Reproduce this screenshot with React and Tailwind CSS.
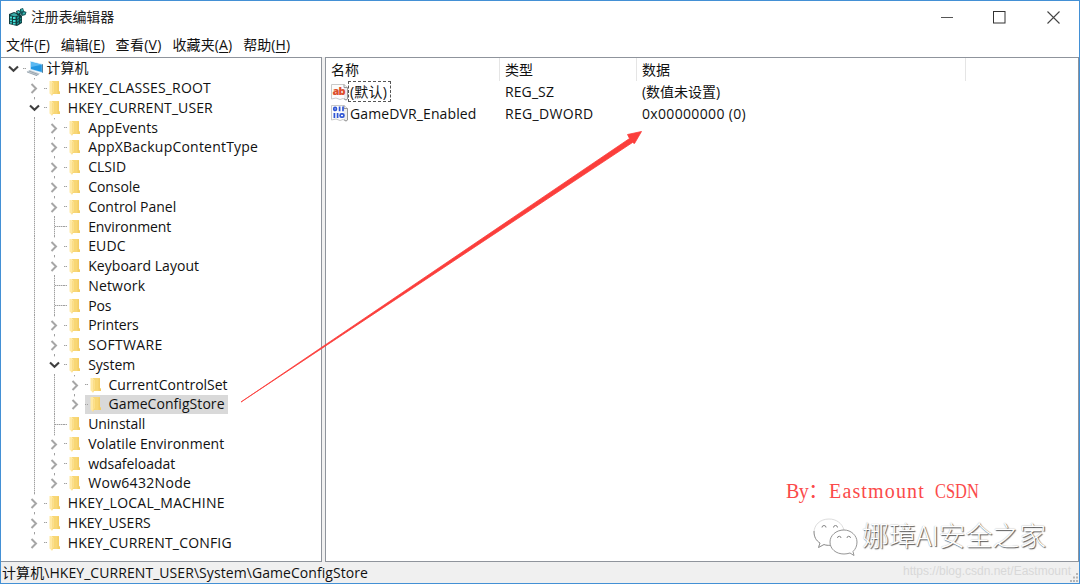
import { useLayoutEffect, useRef } from "react";

// Spreads a label over a given width by adjusting its letter spacing.
function Fit({ w, className = "", children }) {
  const ref = useRef(null);
  useLayoutEffect(() => {
    const el = ref.current;
    el.style.letterSpacing = "0px";
    const n = el.textContent.length;
    el.style.letterSpacing = `${(w - el.getBoundingClientRect().width) / n}px`;
  }, [w]);
  return (
    <span ref={ref} className={`inline-block shrink-0 whitespace-nowrap ${className}`}>
      {children}
    </span>
  );
}

const TREE = [
  { d: 0, t: "计算机", w: 42, s: "open" },
  { d: 1, t: "HKEY_CLASSES_ROOT", w: 143, s: "closed" },
  { d: 1, t: "HKEY_CURRENT_USER", w: 145, s: "open" },
  { d: 2, t: "AppEvents", w: 70, s: "closed" },
  { d: 2, t: "AppXBackupContentType", w: 170, s: "closed" },
  { d: 2, t: "CLSID", w: 38, s: "closed" },
  { d: 2, t: "Console", w: 52, s: "closed" },
  { d: 2, t: "Control Panel", w: 88, s: "closed" },
  { d: 2, t: "Environment", w: 83, s: "leaf" },
  { d: 2, t: "EUDC", w: 37.5, s: "closed" },
  { d: 2, t: "Keyboard Layout", w: 111, s: "closed" },
  { d: 2, t: "Network", w: 57, s: "leaf" },
  { d: 2, t: "Pos", w: 23, s: "leaf" },
  { d: 2, t: "Printers", w: 50.5, s: "closed" },
  { d: 2, t: "SOFTWARE", w: 74.5, s: "closed" },
  { d: 2, t: "System", w: 47, s: "open" },
  { d: 3, t: "CurrentControlSet", w: 119, s: "closed" },
  { d: 3, t: "GameConfigStore", w: 116, s: "closed", sel: true, last: true },
  { d: 2, t: "Uninstall", w: 57, s: "leaf" },
  { d: 2, t: "Volatile Environment", w: 136, s: "closed" },
  { d: 2, t: "wdsafeloadat", w: 87, s: "closed" },
  { d: 2, t: "Wow6432Node", w: 103, s: "closed", last: true },
  { d: 1, t: "HKEY_LOCAL_MACHINE", w: 157, s: "closed" },
  { d: 1, t: "HKEY_USERS", w: 83, s: "closed" },
  { d: 1, t: "HKEY_CURRENT_CONFIG", w: 164, s: "closed", last: true },
];

const VDOTS = "w-px bg-[repeating-linear-gradient(to_bottom,#a0a0a0_0_1px,#dcdcdc_1px_2px)]";
const HDOTS = "h-px bg-[repeating-linear-gradient(to_right,#a0a0a0_0_1px,#d4d4d4_1px_2px)]";

function Chevron({ open }) {
  return open ? (
    <svg width="11" height="8" viewBox="0 0 11 8" className="shrink-0">
      <path d="M1 1.4 5.5 5.7 10 1.4" fill="none" stroke="#404040" strokeWidth="2.1" />
    </svg>
  ) : (
    <svg width="8" height="11" viewBox="0 0 8 11" className="shrink-0">
      <path d="M1.5 1 6 5.5 1.5 10" fill="none" stroke="#a6a6a6" strokeWidth="2" />
    </svg>
  );
}

function Folder() {
  return (
    <svg width="12" height="16" viewBox="0 0 12 16" className="shrink-0">
      <path d="M3 1H10V11L11 12V14H3Z" fill="#f8d775" />
      <path d="M8.5 1.5H10V11L11 12V14H8.5Z" fill="#f3cd66" />
      <path d="M.5 1H2.5L4.5 3V12L3 15.4 .5 13.5Z" fill="#ffe9a4" />
      <path d="M3.6 3V12.5L3 15.4" fill="none" stroke="#fbdc85" />
    </svg>
  );
}

function Computer() {
  return (
    <svg width="18" height="17" viewBox="0 0 18 17" className="shrink-0">
      <path d="M4 1 16.5 4V13L4 9.5Z" fill="#bfe2f8" />
      <path d="M5 2.1 15.8 4.7V11.9L5 9Z" fill="#2196e3" />
      <path d="M5 2.1 15.8 4.7 5 7Z" fill="#5ab8f2" />
      <path d="M16 4V13L17 12.5V4.5Z" fill="#537f9c" />
      <path d="M.5 11.5 4 10 14 13.5 11 16Z" fill="#c5ced5" />
      <path d="M1 12 11 15.7M3 11 12.5 14.7" stroke="#8e9ba5" strokeWidth=".8" />
    </svg>
  );
}

function TreeRow({ d, t, w, s, sel, last }) {
  const cells = [];
  for (let i = 1; i < d; i++) cells.push(i);
  return (
    <div className="flex h-[19.77px] items-center">
      {d > 0 && <span className="w-[20.4px] shrink-0" />}
      {cells.map((i) => (
        <span key={i} className="flex h-full w-[20.4px] shrink-0 justify-center pl-px">
          <span className={`h-full ${VDOTS}`} />
        </span>
      ))}
      <span className="flex h-full w-[20.4px] shrink-0 flex-col items-center pl-px">
        {s === "leaf" ? (
          <span className="flex h-full items-center pl-[11px]">
            <span className={`h-full ${VDOTS}`} />
            <span className={`w-2.5 ${HDOTS}`} />
          </span>
        ) : (
          <>
            <span className={`h-0.5 shrink-0 ${d > 0 ? VDOTS : ""}`} />
            <span className="flex flex-1 items-center">
              <Chevron open={s === "open"} />
            </span>
            <span className={`h-px shrink-0 ${d > 0 && !last ? VDOTS : ""}`} />
          </>
        )}
      </span>
      <span
        className={`flex h-full items-center ${sel ? "bg-[#d9d9d9]" : ""} ${
          d === 0 ? "w-[70px]" : ""
        }`}
      >
        <span className={`shrink-0 ${HDOTS} ${d === 0 ? "w-[3px]" : "mr-0.5 w-[3px]"}`} />
        {d === 0 ? <Computer /> : <Folder />}
        <span className={d === 0 ? "w-0.5" : "w-[7px]"} />
        <Fit w={w} className={`mb-px ${sel ? "mr-[3px]" : ""}`}>{t}</Fit>
      </span>
    </div>
  );
}

function AppIcon() {
  return (
    <svg width="19" height="18" viewBox="0 0 19 18">
      <path d="M1 6 6 4 12 6 14 8V15L9 18 1 16Z" fill="#123c3f" />
      <path d="M2 7 6 5 11 7 7 8.5Z" fill="#3aa9a6" />
      <path
        d="M2 8.5H4V10.5H2ZM5 9H7.5V11H5ZM2 11.5H4V13.3H2ZM5 12H7.5V14H5ZM2 14.3H4V15.6H2ZM5 14.8H7.5V16.6H5Z"
        fill="#42dcd4"
      />
      <path d="M9 9 11 8V10L9 11ZM9 12 11 11V13L9 14ZM9 15 11 14V15.5L9 16.7ZM12 10 13.3 9.5V11L12 11.8ZM12 13 13.3 12.3V14L12 14.7Z" fill="#168f8d" />
      <path d="M8 3 11 2 13 4 12 7 9 7Z" fill="#103a3e" />
      <path d="M9 3.6 11 3 12 4.4 10 5.7Z" fill="#3fc9c2" />
      <path d="M12 1 15 0 16 3 18.5 4 17.5 7 14 8 12 5Z" fill="#14565a" />
      <path d="M13 1.6 14.5 1 15 3 13.5 3.6ZM15 4.4 17.4 4.6 16.5 6.3 14.5 6.4Z" fill="#37bdb7" />
    </svg>
  );
}

function ValueIcon({ kind }) {
  return (
    <svg width="18" height="18" viewBox="0 0 18 18" className="shrink-0">
      <path d="M.5 1.5H13L16.5 4.5V16L15 17 12 15.5 9 16.5 5 15 .5 16Z" fill="#fcfcfc" stroke="#c9c9c9" />
      <path d="M13 1.5V4.5H16.5V16L15 17 13 15.7" fill="#eee" stroke="#8f8f8f" strokeWidth=".9" />
      {kind === "sz" ? (
        <text x="1.5" y="12.3" fontFamily="Open Sans, sans-serif" fontWeight="800" fontSize="11" fill="#dd4f2d" textLength="13">
          ab
        </text>
      ) : (
        <g fill="none" stroke="#2f55d4" strokeWidth="1.7">
          <rect x="2.8" y="3.4" width="2.6" height="3" rx="1.2" />
          <path d="M8.6 2.6V7.2M12 2.6V7.2M3.4 9V14M6.6 9V14" />
          <rect x="9.1" y="9.9" width="3.8" height="3.2" rx="1.4" />
        </g>
      )}
    </svg>
  );
}

const MENU = [
  ["文件", "F", 44],
  ["编辑", "E", 44],
  ["查看", "V", 46],
  ["收藏夹", "A", 60],
  ["帮助", "H", 47],
];

function WeChat() {
  return (
    <svg width="45" height="39" viewBox="0 0 45 39" className="shrink-0">
      <g fill="#fff" stroke="#8a8a8a" strokeWidth=".9">
        <path d="M16 1C7 1 1 7 1 14.500 1 19 3 22.500 7 25L5.500 29.500 11 26.500C13 27.300 15 27.500 18 27.300 16 19 22 12.500 31 12 29 5 23 1 16 1Z" stroke="#d8d8d8" />
        <path d="M1 13C1 19 3 22.500 7 25L5.500 29.500 11 26.500C13 27.300 15 27.500 17 27.300" fill="none" />
        <path d="M31 12C23 12 17 17.500 17 24 17 31 23 36 31 36 33 36 35 35.600 37 35L41 37.500 40 33.500C42.500 31.200 44 28 44 24 44 17.500 38 12 31 12Z" />
      </g>
      <path
        d="M9 9.500A2 2 0 0 1 13 9.500M20.500 9.500A2 2 0 0 1 24.500 9.500M24.500 20A1.700 1.700 0 0 1 28 20M34 20A1.700 1.700 0 0 1 37.500 20"
        fill="none"
        stroke="#888"
      />
    </svg>
  );
}

export default function App() {
  return (
    <div className="relative flex h-[584px] w-[1080px] flex-col overflow-hidden border border-[#4390d5] bg-[#f0f0f0] font-['Open_Sans','Noto_Sans_CJK_SC',sans-serif] text-[14px] leading-[19px] text-[#111]">
      <header className="flex h-8 shrink-0 items-center bg-white pl-[7px]">
        <AppIcon />
        <Fit w={83} className="mb-0.5 ml-1 text-[#222]">注册表编辑器</Fit>
        <div className="ml-auto flex items-center pr-[19px]">
          <svg width="12" height="13" viewBox="0 0 12 13" className="mr-10">
            <path d="M0 6.500H12" stroke="#555" />
          </svg>
          <svg width="13" height="13" viewBox="0 0 13 13" className="mr-[41px]">
            <rect x=".5" y=".5" width="11.500" height="11.500" fill="none" stroke="#333" />
          </svg>
          <svg width="13" height="13" viewBox="0 0 13 13">
            <path d="M.5.5 12.500 12.500M12.500.5.5 12.500" stroke="#444" strokeWidth="1.100" />
          </svg>
        </div>
      </header>

      <nav className="flex h-6 shrink-0 items-center gap-[10.800px] bg-white pb-0.5 pl-[5px]">
        {MENU.map(([label, key, w]) => (
          <Fit key={key} w={w}>
            {label}(<span className="underline decoration-1 underline-offset-2">{key}</span>)
          </Fit>
        ))}
      </nav>

      <main className="flex h-[505px] shrink-0 gap-[3px]">
        <section className="w-[321px] border border-l-0 border-[#8f949c] bg-white pl-[2px] pt-[0.500px]">
          {TREE.map((row) => (
            <TreeRow key={row.t} {...row} />
          ))}
        </section>

        <section className="flex flex-1 flex-col border border-[#8f949c] bg-white">
          <div className="flex h-[23px] shrink-0 items-center">
            <span className="flex h-full w-[174px] items-center border-r border-[#e5e5e5] pl-[5px]"><Fit w={28}>名称</Fit></span>
            <span className="flex h-full w-[137px] items-center border-r border-[#e5e5e5] pl-[5px]"><Fit w={28}>类型</Fit></span>
            <span className="flex h-full w-[329px] items-center border-r border-[#e5e5e5] pl-[5px]"><Fit w={28}>数据</Fit></span>
          </div>
          <div className="flex h-[21.500px] items-center pl-[5px]">
            <span className="flex w-[174px] shrink-0 items-center">
              <ValueIcon kind="sz" />
              <span className="-ml-px flex h-[21px] w-[43px] items-center border border-dashed border-[#555] pl-px">
                <Fit w={37}>(默认)</Fit>
              </span>
            </span>
            <span className="w-[137px]"><Fit w={49}>REG_SZ</Fit></span>
            <Fit w={78}>(数值未设置)</Fit>
          </div>
          <div className="flex h-[21.500px] items-center pl-[5px]">
            <span className="flex w-[174px] shrink-0 items-center">
              <ValueIcon kind="dword" />
              <Fit w={126.5} className="ml-px">GameDVR_Enabled</Fit>
            </span>
            <span className="w-[137px]"><Fit w={88.5}>REG_DWORD</Fit></span>
            <Fit w={104}>0x00000000 (0)</Fit>
          </div>
        </section>
      </main>

      <footer className="flex flex-1 items-center justify-between pl-px">
        <Fit w={366}>计算机\HKEY_CURRENT_USER\System\GameConfigStore</Fit>
        <span className="flex items-end">
          <Fit w={168} className="mb-0.5 font-['Liberation_Sans',sans-serif] text-[12px] text-[#d8d8d8]">
            https://blog.csdn.net/Eastmount
          </Fit>
          <svg width="10" height="10" viewBox="0 0 10 10" className="-ml-0.5">
            <path d="M7 0H9V2H7ZM4 3.500H6V5.500H4ZM7 3.500H9V5.500H7ZM1 7H3V9H1ZM4 7H6V9H4ZM7 7H9V9H7Z" fill="#b5b5b5" />
          </svg>
        </span>
      </footer>

      <svg width="404" height="274" viewBox="0 0 404 274" className="pointer-events-none absolute left-[239px] top-[129px]">
        <path d="M1 272 389.500 8.500 387.500 4.500 401.500 1.500 394.500 13.500 392.500 12.500Z" fill="#fb3e3b" stroke="#fb3e3b" strokeWidth=".8" strokeLinejoin="round" />
      </svg>

      <div className="absolute left-[785px] top-[477px] flex font-['Liberation_Serif','Noto_Sans_CJK_SC',serif] text-[20px] leading-[26px] text-[#fb4a4a]">
        <span className="w-[43px] shrink-0 whitespace-nowrap tracking-[-0.500px]">By：</span>
        <Fit w={96}>Eastmount</Fit>
        <span className="ml-[10px] inline-block origin-left scale-x-82">CSDN</span>
      </div>

      <div className="absolute left-[812px] top-[515px] flex items-center gap-[4px]">
        <WeChat />
        <Fit w={184} className="mb-1 font-['Noto_Sans_CJK_SC',sans-serif] text-[27px] font-light leading-[38px] text-white [text-shadow:1px_1px_1px_#555,0_0_1px_#aaa]">
          娜璋AI安全之家
        </Fit>
      </div>
    </div>
  );
}
